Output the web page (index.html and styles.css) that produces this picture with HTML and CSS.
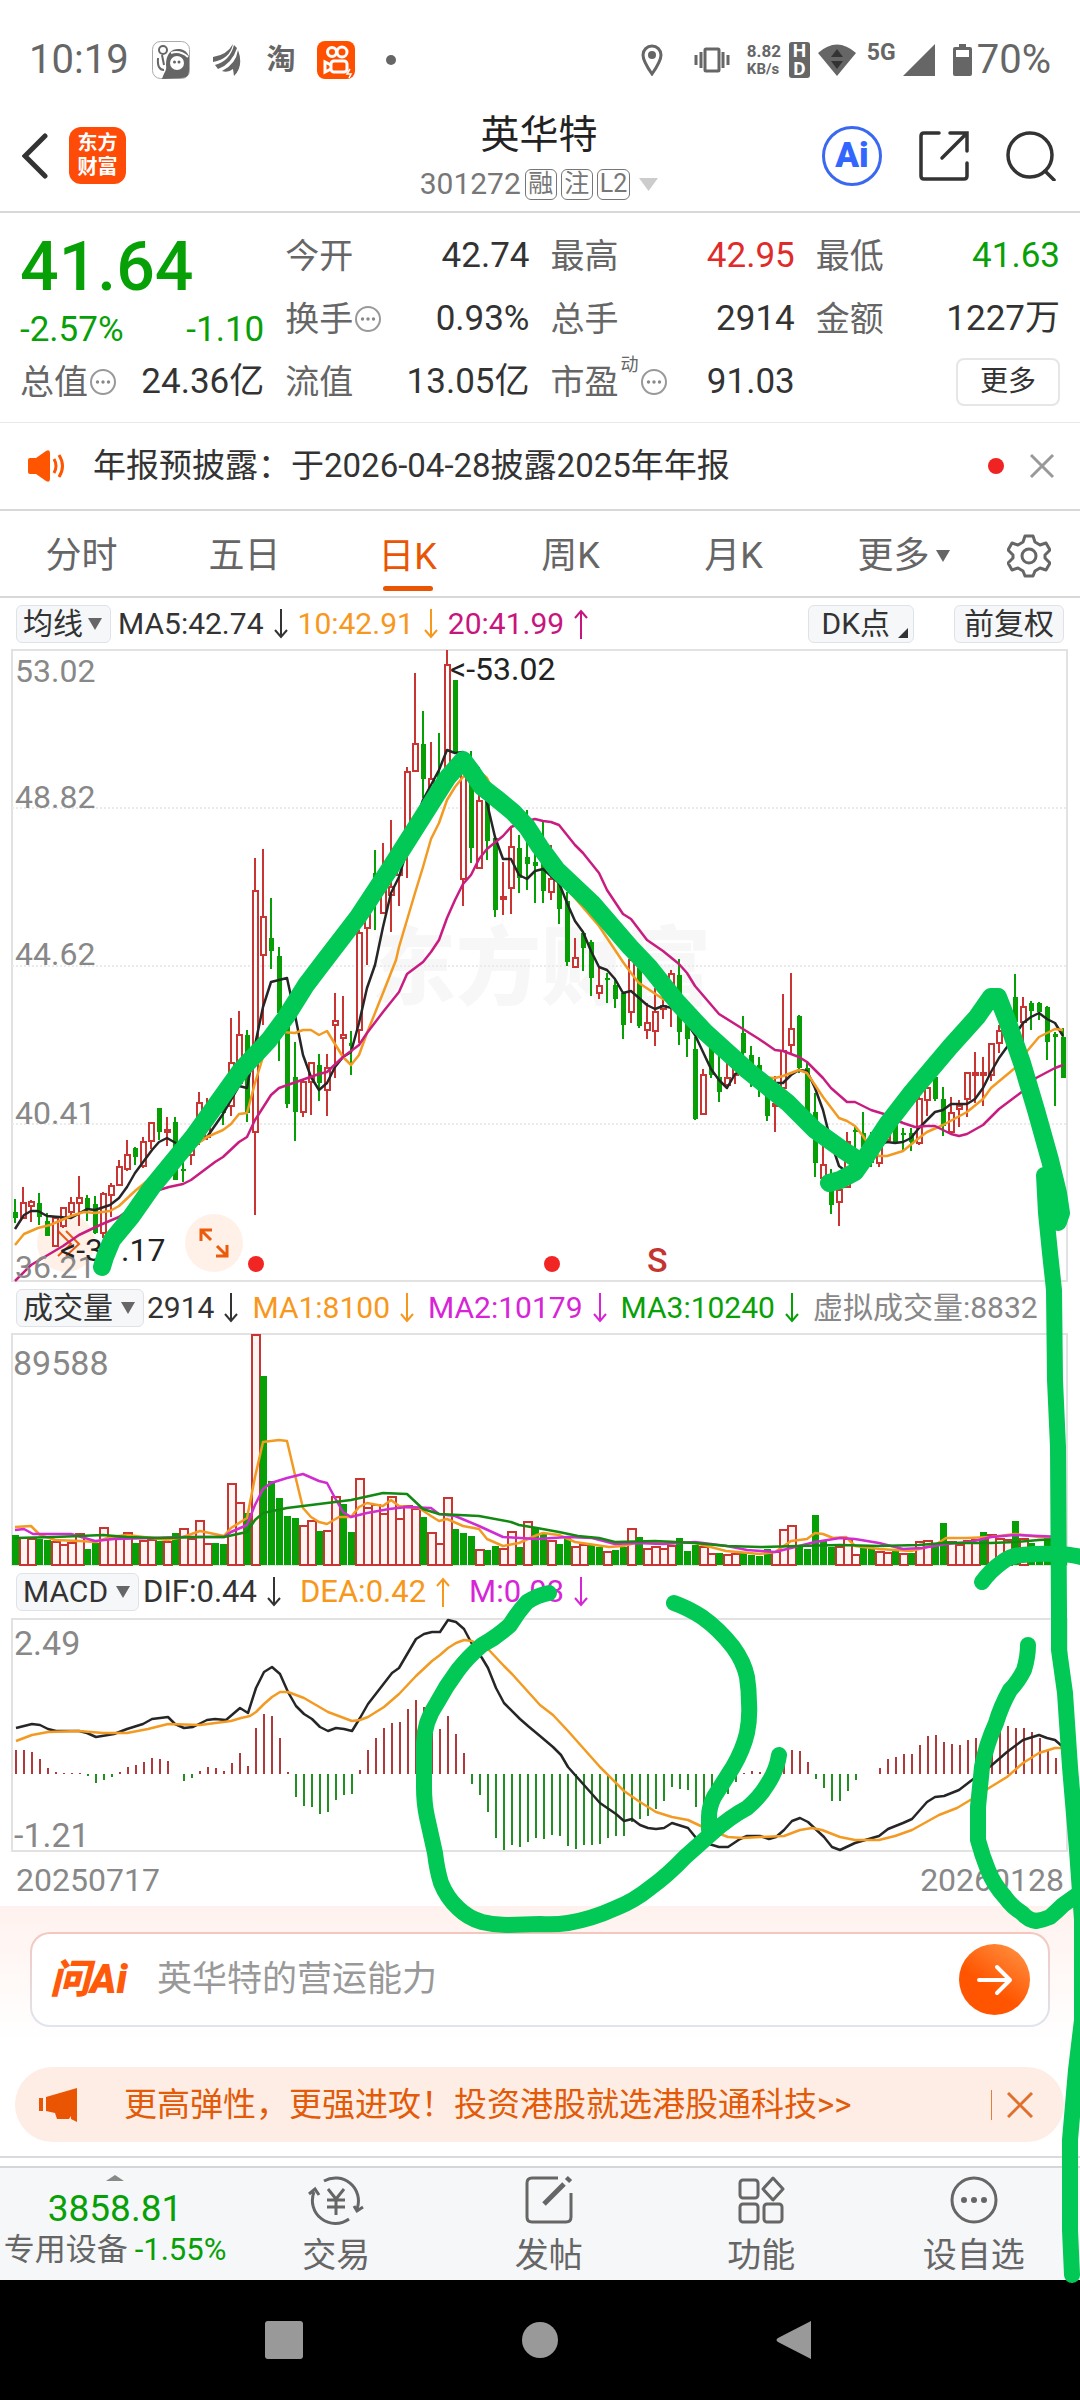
FILE: index.html
```html
<!DOCTYPE html>
<html lang="zh-CN">
<head>
<meta charset="utf-8">
<meta name="viewport" content="width=device-width, initial-scale=1">
<title>英华特 301272</title>
<link rel="stylesheet" href="styles.css">
</head>
<body>
<svg class="defs" aria-hidden="true">
  <symbol id="down" viewBox="0 0 14 30"><path d="M7 0V28M1 21L7 28L13 21" fill="none" stroke="currentColor" stroke-width="2"/></symbol>
  <symbol id="up" viewBox="0 0 14 30"><path d="M7 30V2M1 9L7 2L13 9" fill="none" stroke="currentColor" stroke-width="2"/></symbol>
  <symbol id="info" viewBox="0 0 26 26"><circle cx="13" cy="13" r="12" fill="none" stroke="#999" stroke-width="2"/><g fill="#888"><circle cx="7.500" cy="13" r="1.700"/><circle cx="13" cy="13" r="1.700"/><circle cx="18.500" cy="13" r="1.700"/></g></symbol>
</svg>
<div class="screen">
  <div class="status">
    <div class="status-side">
      <time class="clock">10:19</time>
      <svg class="app-a" viewBox="0 0 38 38"><rect x=".5" y=".5" width="37" height="37" rx="8" fill="#fff" stroke="#aaa"/><path d="M10 38C12 31 15 30 14 24C14 12 20 8 26 8C32 8 34 10 37 15V30Q37 37 30 37Z" fill="#666"/><circle cx="11" cy="9" r="4" fill="none" stroke="#666" stroke-width="2"/><path d="M6 17Q5 29 12 29M10 14L12 24" stroke="#666" stroke-width="2" fill="none"/><circle cx="25" cy="22" r="7" fill="#fff"/><path d="M19 12Q28 9 36 16" stroke="#fff" stroke-width="2" fill="none"/><circle cx="22.500" cy="21" r="1.500" fill="#666"/><circle cx="27" cy="21" r="1.500" fill="#666"/></svg>
      <svg class="app-b" viewBox="0 0 28 32"><path d="M0 13Q14 11 20 0Q17 15 0 18ZM2 21Q17 17 21 1L24 4Q19 20 5 25ZM9 27Q23 20 25 6Q31 22 21 32L20 25Q15 29 9 27Z" fill="#666"/></svg>
      <span class="tao">淘</span>
      <svg class="app-c" viewBox="0 0 38 38"><rect width="38" height="38" rx="8" fill="#ff5000"/><g fill="none" stroke="#fff" stroke-width="3"><circle cx="15" cy="11" r="4.500"/><circle cx="25" cy="11" r="5"/><rect x="14" y="20" width="16" height="11" rx="3"/><path d="M14 24L8 21V31L14 28"/></g><path d="M33 28L30 33H34L32 37" stroke="#fff" stroke-width="1.500" fill="none"/></svg>
      <span class="more-dot"></span>
    </div>
    <div class="status-side">
      <svg class="pin" viewBox="0 0 22 32"><path d="M11 30Q2 17 2 11A9 9 0 0 1 20 11Q20 17 11 30Z" fill="none" stroke="#666" stroke-width="3"/><circle cx="11" cy="11" r="4" fill="#666"/></svg>
      <svg class="vibrate" viewBox="0 0 36 26"><rect x="11" y="2" width="14" height="22" rx="1" fill="none" stroke="#666" stroke-width="3"/><path d="M7 5V21M2 8V18M29 5V21M34 8V18" stroke="#666" stroke-width="3"/></svg>
      <span class="speed">8.82<small>KB/s</small></span>
      <span class="hd"><b>H</b><b>D</b></span>
      <svg class="wifi" viewBox="0 0 38 32"><path d="M0 9Q19 -8 38 9L19 32Z" fill="#666"/><path d="M13 13L19 5L25 13ZM13 17H25L19 25Z" fill="#333"/></svg>
      <span class="net">5G</span>
      <svg class="signal" viewBox="0 0 32 32"><path d="M32 0V32H0Z" fill="#666"/></svg>
      <svg class="battery" viewBox="0 0 19 32"><path d="M6 0H13V3H17Q19 3 19 5V30Q19 32 17 32H2Q0 32 0 30V5Q0 3 2 3H6Z" fill="#666"/><path d="M3 6H16V13H3Z" fill="#fff"/></svg>
      <span class="clock">70%</span>
    </div>
  </div>

  <header class="header">
    <div class="header-left">
      <button class="icon-btn" aria-label="返回"><svg class="back" viewBox="0 0 26 46"><path d="M23 3L3 23L23 43" fill="none" stroke="#333" stroke-width="5" stroke-linecap="round"/></svg></button>
      <a class="brand" href="#">东方<br>财富</a>
    </div>
    <div class="title">
      <h1>英华特</h1>
      <div class="code">301272 <i>融</i><i>注</i><i>L2</i><svg class="caret" viewBox="0 0 19 13"><path d="M0 0H19L9.500 13Z" fill="#ccc"/></svg></div>
    </div>
    <div class="header-right">
      <button class="ai-btn">Ai</button>
      <button class="icon-btn" aria-label="分享"><svg class="share" viewBox="0 0 50 50"><path d="M20 2H5Q2 2 2 5V45Q2 48 5 48H45Q48 48 48 45V32M31 2H48V20M47 3L23 27" fill="none" stroke="#333" stroke-width="3.500" stroke-linecap="round"/></svg></button>
      <button class="icon-btn" aria-label="搜索"><svg class="search" viewBox="0 0 50 50"><circle cx="24" cy="24" r="22" fill="none" stroke="#333" stroke-width="3.500"/><path d="M39 40L48 49" stroke="#333" stroke-width="3.500" stroke-linecap="round"/></svg></button>
    </div>
  </header>

  <section class="quote">
    <div class="col">
      <div class="price green">41.64</div>
      <div class="pair change green"><span>-2.57%</span><span>-1.10</span></div>
      <div class="pair"><span class="label">总值<svg class="info"><use href="#info"/></svg></span><span>24.36亿</span></div>
    </div>
    <div class="col">
      <div class="pair"><span class="label">今开</span><span>42.74</span></div>
      <div class="pair"><span class="label">换手<svg class="info"><use href="#info"/></svg></span><span>0.93%</span></div>
      <div class="pair"><span class="label">流值</span><span>13.05亿</span></div>
    </div>
    <div class="col">
      <div class="pair"><span class="label">最高</span><span class="red">42.95</span></div>
      <div class="pair"><span class="label">总手</span><span>2914</span></div>
      <div class="pair"><span class="label">市盈<small>动</small><svg class="info"><use href="#info"/></svg></span><span>91.03</span></div>
    </div>
    <div class="col">
      <div class="pair"><span class="label">最低</span><span class="green">41.63</span></div>
      <div class="pair"><span class="label">金额</span><span>1227万</span></div>
      <div class="pair end"><button class="more">更多</button></div>
    </div>
  </section>

  <section class="notice">
    <svg class="horn" viewBox="0 0 38 32"><path d="M0 10Q0 8 2 8H8L18 1Q22 -1 22 3V29Q22 33 18 31L8 24H2Q0 24 0 22Z" fill="#ff5500"/><path d="M26 9Q30 16 26 23M31 5Q38 16 31 27" fill="none" stroke="#ff5500" stroke-width="3"/></svg>
    <a class="notice-text" href="#">年报预披露：于2026-04-28披露2025年年报</a>
    <span class="red-dot"></span>
    <button class="icon-btn" aria-label="关闭"><svg class="close" viewBox="0 0 26 26"><path d="M2 2L24 24M24 2L2 24" stroke="#999" stroke-width="3"/></svg></button>
  </section>

  <nav class="tabs">
    <button>分时</button>
    <button>五日</button>
    <button class="active">日K</button>
    <button>周K</button>
    <button>月K</button>
    <button class="tab-more">更多<svg class="tri" viewBox="0 0 14 12"><path d="M0 0H14L7 12Z" fill="#666"/></svg></button>
    <button aria-label="设置"><svg class="gear" viewBox="0 0 44 44"><path d="M18 2H26L28 8L33 11L39 9L43 16L38 21V24L43 29L39 36L33 34L28 37L26 42H18L16 37L11 34L5 36L1 29L6 24V21L1 16L5 9L11 11L16 8Z" fill="none" stroke="#666" stroke-width="3" stroke-linejoin="round"/><circle cx="22" cy="22" r="7" fill="none" stroke="#666" stroke-width="3"/></svg></button>
  </nav>

  <div class="legend">
    <button class="chip">均线<svg class="tri" viewBox="0 0 14 12"><path d="M0 0H14L7 12Z" fill="#666"/></svg></button>
    <span>MA5:42.74<svg class="arrow"><use href="#down"/></svg></span>
    <span class="orange tight">10:42.91<svg class="arrow"><use href="#down"/></svg></span>
    <span class="magenta tight">20:41.99<svg class="arrow"><use href="#up"/></svg></span>
    <span class="chips">
      <button class="chip dk">DK点<svg class="corner" viewBox="0 0 10 10"><path d="M10 0V10H0Z" fill="#333"/></svg></button>
      <button class="chip wide">前复权</button>
    </span>
  </div>
  <div class="price-panel">
    <svg id="price" class="plot" viewBox="0 -1 1080 633" role="img" aria-label="日K线"></svg>
    <button class="expand" aria-label="全屏"><svg viewBox="0 0 58 58"><path d="M16 27V16H27M16 16L26 26M42 31V42H31M42 42L32 32" fill="none" stroke="#ea5b0c" stroke-width="3"/></svg></button>
  </div>
  <div class="legend">
    <button class="chip">成交量<svg class="tri gap" viewBox="0 0 14 12"><path d="M0 0H14L7 12Z" fill="#666"/></svg></button>
    <span class="near">2914<svg class="arrow"><use href="#down"/></svg></span>
    <span class="orange">MA1:8100<svg class="arrow"><use href="#down"/></svg></span>
    <span class="violet">MA2:10179<svg class="arrow"><use href="#down"/></svg></span>
    <span class="green">MA3:10240<svg class="arrow"><use href="#down"/></svg></span>
    <span class="gray">虚拟成交量:8832</span>
  </div>
  <svg id="volume" class="plot" viewBox="0 -1 1080 233" role="img" aria-label="成交量"></svg>
  <div class="legend roomy">
    <button class="chip">MACD<svg class="tri gap" viewBox="0 0 14 12"><path d="M0 0H14L7 12Z" fill="#666"/></svg></button>
    <span class="near">DIF:0.44<svg class="arrow"><use href="#down"/></svg></span>
    <span class="orange">DEA:0.42<svg class="arrow"><use href="#up"/></svg></span>
    <span class="violet">M:0.03<svg class="arrow"><use href="#down"/></svg></span>
  </div>
  <svg id="macd" class="plot" viewBox="0 -1 1080 235" role="img" aria-label="MACD"></svg>
  <div class="dates"><time>20250717</time><time>20260128</time></div>

  <section class="ask">
    <form class="ask-box">
      <label class="ask-logo" for="question">问Ai</label>
      <input id="question" type="text" placeholder="英华特的营运能力">
      <button class="send" type="button" aria-label="提问"><svg viewBox="0 0 36 32"><path d="M2 16H33M20 3L33 16L20 29" fill="none" stroke="#fff" stroke-width="4" stroke-linecap="round" stroke-linejoin="round"/></svg></button>
    </form>
  </section>
  <aside class="banner">
    <svg class="mega" viewBox="0 0 38 34"><path d="M38 0V34L32 31V28L30 31H18L16 25L7 23V9ZM0 10H4V23H0Z" fill="#ea5504"/></svg>
    <a href="#">更高弹性，更强进攻！投资港股就选港股通科技&gt;&gt;</a>
    <span class="rule"></span>
    <button class="icon-btn" aria-label="关闭广告"><svg class="close" viewBox="0 0 26 26"><path d="M1 1L25 25M25 1L1 25" stroke="#e0702e" stroke-width="3"/></svg></button>
  </aside>

  <nav class="dock">
    <a class="index" href="#">
      <svg class="peak" viewBox="0 0 18 6"><path d="M0 6L9 0L18 6Z" fill="#888"/></svg>
      <strong class="green">3858.81</strong>
      <span>专用设备<em class="green">-1.55%</em></span>
    </a>
    <a href="#"><svg viewBox="0 0 56 50"><g fill="none" stroke="#666" stroke-width="3"><path d="M16 6A23 23 0 0 1 49 34M41 44A23 23 0 0 1 6 17M1 19L7 14L11 20M46 31L49 36L55 32M20 14L28 24L36 14M19 25H37M19 32H37M28 24V40"/></g></svg>交易</a>
    <a href="#"><svg viewBox="0 0 56 50"><g fill="none" stroke="#666" stroke-width="3"><path d="M37 3H11Q6 3 6 8V42Q6 47 11 47H45Q50 47 50 42V18"/><path d="M23 29L43 9" stroke-width="5"/><path d="M46 6L49 3" stroke-width="6"/></g></svg>发帖</a>
    <a href="#"><svg viewBox="0 0 56 50"><g fill="none" stroke="#666" stroke-width="3"><rect x="7" y="5" width="18" height="18" rx="3"/><rect x="7" y="29" width="18" height="18" rx="3"/><rect x="31" y="29" width="18" height="18" rx="3"/><path d="M40 3L50 14L40 25L30 14Z" stroke-linejoin="round"/></g></svg>功能</a>
    <a href="#"><svg viewBox="0 0 56 50"><circle cx="28" cy="25" r="22" fill="none" stroke="#666" stroke-width="3"/><g fill="#666"><circle cx="18" cy="25" r="3"/><circle cx="28" cy="25" r="3"/><circle cx="38" cy="25" r="3"/></g></svg>设自选</a>
  </nav>

  <div class="system">
    <button aria-label="最近任务"><svg viewBox="0 0 40 40"><rect x="1" y="1" width="38" height="38" rx="3" fill="#999"/></svg></button>
    <button aria-label="主屏幕"><svg viewBox="0 0 40 40"><circle cx="20" cy="20" r="18" fill="#999"/></svg></button>
    <button aria-label="后退"><svg viewBox="0 0 40 40"><path d="M35 1V39L2 22Q-1 20 2 18Z" fill="#999"/></svg></button>
  </div>

  <svg class="marks" viewBox="0 0 1080 2400" aria-hidden="true">
    <g fill="none" stroke="#02c855" stroke-width="16" stroke-linecap="round" stroke-linejoin="round">
      <path stroke-width="18" d="M102 1267L105 1257L112 1240L131 1217L152 1187L193 1137L241 1070L269 1040L286 1017L306 985L325 960L358 917L389 870L427 810L448 777L463 760L472 772L482 787L496 798L513 812L527 827L540 847L557 870L592 903L630 947L650 968L678 1003L705 1032L747 1070L788 1103L815 1130L843 1150L855 1158"/>
      <path stroke-width="18" d="M829 1183L840 1180L855 1172L867 1155L888 1123L912 1092L950 1047L977 1017L991 997L998 997L1007 1020L1022 1063L1036 1110L1050 1160L1058 1193L1061 1213L1058 1222"/>
      <path d="M1044 1175L1046 1213L1050 1253L1054 1290L1055 1380L1058 1447L1059 1610L1059 1650L1065 1693L1070 1767L1077 1850L1082 1920L1082 2020L1076 2070L1070 2140L1070 2230L1072 2275M1052 1180L1054 1220"/>
      <path d="M549 1593Q538 1595 527 1602Q518 1612 510 1625Q497 1637 482 1645Q468 1657 458 1670Q446 1686 437 1703Q424 1722 424 1743V1787Q424 1803 427 1817Q431 1835 435 1853Q437 1870 441 1883Q447 1898 458 1908Q468 1918 482 1922Q494 1925 506 1925L540 1924Q555 1925 568 1923Q592 1919 616 1908Q634 1901 650 1888Q668 1875 685 1857L712 1833Q730 1817 747 1808Q760 1797 767 1785Q777 1770 779 1755"/>
      <path d="M674 1603Q688 1608 702 1617Q719 1629 733 1647Q744 1662 747 1677Q749 1690 749 1703Q750 1718 747 1733Q743 1750 733 1767L714 1797Q709 1807 709 1817V1830"/>
      <path d="M982 1582Q990 1571 1001 1563Q1011 1555 1022 1555Q1040 1553 1057 1554Q1072 1554 1084 1558M1028 1645Q1028 1657 1024 1670Q1018 1682 1010 1690Q1001 1706 996 1723Q986 1745 982 1767L978 1807V1840Q982 1855 988 1870Q994 1885 1005 1897Q1012 1907 1022 1913Q1028 1920 1036 1921Q1043 1920 1050 1917Q1057 1911 1063 1905L1084 1890"/>
    </g>
  </svg>
</div>
<script src="charts.js"></script>
</body>
</html>
```
FILE: styles.css
```css
* { box-sizing: border-box; }
body {
  margin: 0;
  background: #fff;
  color: #333;
  font-family: Roboto, "Noto Sans CJK SC", sans-serif;
  font-size: 34px;
  line-height: 40px;
}
button, input { font: inherit; color: inherit; border: 0; padding: 0; margin: 0; background: none; }
a { color: inherit; text-decoration: none; }
svg { display: block; flex: none; }
.defs { position: absolute; width: 0; height: 0; }
.screen { position: relative; overflow: hidden; }
.green { color: #07a007; }
.red { color: #e02b2b; }
.orange { color: #f7981d; }
.magenta { color: #c8157e; }
.violet { color: #d724d7; }
.gray { color: #888; }
.icon-btn { display: block; flex: none; }

.status { display: flex; justify-content: space-between; padding: 38px 29px 0 29px; height: 108px; color: #666; }
.status-side { display: flex; align-items: center; height: 44px; }
.clock { font-size: 40px; line-height: 44px; }
.app-a { width: 38px; height: 38px; margin-left: 23px; }
.app-b { width: 28px; height: 32px; margin-left: 23px; }
.tao { font-size: 29px; font-weight: 700; margin-left: 26px; }
.app-c { width: 38px; height: 38px; margin-left: 21px; }
.more-dot { width: 10px; height: 10px; border-radius: 50%; background: #666; margin-left: 31px; }
.pin { width: 22px; height: 32px; }
.vibrate { width: 36px; height: 26px; margin-left: 31px; }
.speed { width: 36px; margin-left: 17px; font-size: 17px; line-height: 18px; font-weight: 700; }
.speed small { display: block; font-size: 15px; }
.hd { display: flex; flex-direction: column; align-items: center; width: 21px; height: 36px; margin-left: 6px; border-radius: 3px; background: #666; color: #fff; font-size: 19px; line-height: 18px; }
.wifi { width: 38px; height: 32px; margin-left: 8px; }
.net { align-self: flex-start; margin-left: 11px; font-size: 23px; line-height: 30px; font-weight: 700; }
.signal { width: 32px; height: 32px; margin-left: 7px; }
.battery { width: 19px; height: 32px; margin: 0 5px 0 18px; }

.header { display: grid; grid-template-columns: 1fr auto 1fr; align-items: center; height: 105px; padding: 0 24px 0 22px; border-bottom: 2px solid #d8d8d8; }
.header-left, .header-right { display: flex; align-items: center; padding-bottom: 8px; }
.header-right { justify-content: flex-end; gap: 37px; }
.back { width: 26px; height: 46px; }
.brand { width: 57px; height: 57px; margin-left: 21px; padding-top: 4px; border-radius: 12px; background: #ff4b08; color: #fff; text-align: center; font-size: 20px; line-height: 24px; font-weight: 700; }
.title { display: flex; flex-direction: column; align-items: center; padding-bottom: 5px; color: #222; }
h1 { margin: 0; font-size: 39px; line-height: 54px; font-weight: 400; }
.code { display: flex; align-items: center; gap: 4px; height: 44px; font-size: 30px; color: #777; }
.code i { height: 31px; min-width: 32px; padding: 0 2px; border: 1px solid #777; border-radius: 6px; text-align: center; font-size: 25px; line-height: 28px; font-style: normal; }
.caret { width: 19px; height: 13px; margin-left: 5px; }
.ai-btn { width: 60px; height: 60px; border: 3px solid #3a68f0; border-radius: 50%; color: #3366ff; font-size: 35px; line-height: 50px; font-weight: 900; }
.share, .search { width: 50px; height: 50px; }

.quote { display: grid; grid-template-columns: repeat(4, 1fr); gap: 21px; height: 210px; padding: 11px 20px 0; border-bottom: 1px solid #e8e8e8; }
.pair { display: flex; justify-content: space-between; align-items: center; height: 63px; font-size: 35px; }
.pair.end { justify-content: flex-end; }
.label { display: flex; align-items: center; font-size: 34px; color: #666; }
.label small { align-self: flex-start; width: 18px; margin: -12px 0 0 2px; font-size: 18px; line-height: 30px; }
.info { width: 26px; height: 26px; margin-left: 2px; }
.price { height: 82px; font-size: 68px; line-height: 86px; font-weight: 500; }
.pair.change { height: 44px; padding-top: 4px; }
.more { width: 104px; height: 48px; border: 2px solid #e6e6e6; border-radius: 8px; font-size: 28px; }

.notice { display: flex; align-items: center; height: 88px; padding: 0 25px 0 28px; border-bottom: 2px solid #d8d8d8; }
.horn { width: 38px; height: 32px; }
.notice-text { flex: 1; margin-left: 27px; font-size: 33px; }
.red-dot { width: 16px; height: 16px; margin-right: 25px; border-radius: 50%; background: #f02222; }
.close { width: 26px; height: 26px; }

.tabs { display: grid; grid-template-columns: repeat(6, 1fr) 102px; height: 87px; border-bottom: 2px solid #d8d8d8; color: #666; font-size: 36px; }
.tabs button { display: flex; justify-content: center; align-items: center; padding-top: 4px; }
.tabs .active { flex-direction: column; color: #ea5504; padding-top: 20px; gap: 9px; }
.tabs .active::after { content: ""; width: 50px; height: 5px; border-radius: 3px; background: #ea5504; }
.tri { width: 14px; height: 12px; margin-left: 5px; }
.tri.gap { margin-left: 8px; }
.tabs .tab-more { padding-left: 14px; }
.tabs .tri { margin-left: 6px; }
.gear { width: 44px; height: 44px; }

.legend { display: flex; align-items: center; gap: 14px; height: 51px; padding: 0 16px; font-size: 30px; white-space: nowrap; }
.legend.roomy { gap: 19px; height: 52px; font-size: 31px; }
.legend span { display: flex; align-items: center; }
.legend > span:nth-child(2) { margin-left: -7px; }
.legend > .near:nth-child(2) { margin-left: -11px; }
.legend.roomy > .near:nth-child(2) { margin-left: -15px; }
.legend > .tight { margin-left: -4px; }
.chip { display: flex; align-items: center; height: 38px; padding: 0 5px 0 6px; border: 1px solid #dfe2e8; border-radius: 6px; background: #f6f7f9; font-size: 30px; }
.chip .tri { margin-right: 3px; }
.arrow { width: 14px; height: 30px; margin-left: 10px; }
.chips { margin-left: auto; gap: 40px; }
.chip.dk { padding-left: 12px; }
.chip.wide { padding: 0 9px; }
.corner { align-self: flex-end; width: 10px; height: 10px; margin: 0 0 4px 8px; }

.plot { width: 100%; height: auto; }
.price-panel { position: relative; }
.expand { position: absolute; left: 185px; bottom: 10px; width: 58px; height: 58px; border-radius: 50%; background: #fff0e8; }
.axis { font-size: 32px; fill: #888; }
.axis.big { font-size: 34px; }
.note { font-size: 32px; fill: #222; }
.sell { font-size: 34px; font-weight: 500; fill: #c43531; }
.watermark { font-size: 85px; font-weight: 900; fill: #f7f7f7; }
.dates { display: flex; justify-content: space-between; align-items: center; height: 53px; padding: 0 16px; font-size: 32px; color: #888; }

.ask { padding: 26px 30px 0; height: 161px; background: linear-gradient(#fff2ee, #fff 85%); }
.ask-box { display: flex; align-items: center; height: 95px; padding: 0 18px; border: 2px solid transparent; border-radius: 20px; background: linear-gradient(#fff, #fff) padding-box, linear-gradient(#f4c6be, #dfe5f0) border-box; }
.ask-logo { width: 107px; font-size: 40px; font-weight: 900; font-style: italic; color: #ff5a0a; }
.ask-box input { flex: 1; min-width: 0; height: 50px; font-size: 35px; outline: 0; }
.ask-box input::placeholder { color: #999; opacity: 1; }
.send { display: grid; place-items: center; width: 71px; height: 71px; border-radius: 50%; background: linear-gradient(215deg, #ff8c3c 10%, #ff5500 60%); }
.send svg { width: 36px; height: 32px; }

.banner { display: flex; align-items: center; height: 75px; margin: 0 16px 14px 15px; padding: 0 31px 0 24px; border-radius: 38px; background: #fdede4; color: #e35a08; font-size: 33px; }
.mega { width: 38px; height: 34px; }
.banner a { flex: 1; margin-left: 47px; white-space: nowrap; }
.rule { width: 1px; height: 30px; margin-right: 15px; background: #e0803e; }

.dock { display: grid; grid-template-columns: 230px repeat(4, 1fr); height: 124px; border-top: 2px solid #d8dadd; background: linear-gradient(#fff 8px, #d3d7dc 8px, #d3d7dc 10px, #f6f7f9 10px); color: #666; }
.dock a { display: flex; flex-direction: column; align-items: center; padding-top: 17px; gap: 10px; line-height: 40px; }
.dock a > svg { width: 56px; height: 50px; }
.dock .index { gap: 0; }
.dock .index .peak { width: 18px; height: 6px; }
.index strong { margin-top: 8px; font-size: 37px; line-height: 40px; font-weight: 400; }
.index span { font-size: 31px; line-height: 42px; white-space: nowrap; }
.index em { margin-left: 7px; font-size: 31px; font-style: normal; }

.system { display: flex; justify-content: center; align-items: center; gap: 216px; height: 120px; background: #000; }
.system svg { width: 40px; height: 40px; }
.marks { position: absolute; left: 0; top: 0; width: 100%; height: auto; pointer-events: none; }
```
FILE: charts.js
```js
// Candles: colour, then high, body top, body bottom and low in chart units.
const candles = `g549,562,568,573 r537,553,568,568 r550,552,556,572 g543,553,567,575 g563,571,586,586 r568,568,596,596
r558,558,576,578 r547,553,562,567 r526,548,553,576 g545,548,559,571 g546,554,583,584 r542,544,583,588
r533,536,545,567 r510,517,535,536 r490,505,519,521 g497,498,507,515 r487,492,516,518 r473,473,491,499
g458,458,482,490 r467,480,482,496 g467,472,530,530 g507,519,520,532 r492,495,505,515 r442,453,490,495
r448,460,487,490 g452,457,465,468 g443,453,463,475 r368,413,456,466 r361,385,433,436 g380,385,463,472
r208,241,482,565 r199,267,305,375 g248,288,301,319 g297,306,363,411 g373,376,454,458 g392,427,462,491
r430,432,462,467 r413,413,432,465 g404,415,433,451 r404,418,440,466 r343,371,375,428 r346,385,388,407
g381,393,396,425 r280,283,380,393 r257,260,278,315 g200,223,243,280 r193,223,263,264 r170,237,245,282
r207,210,225,256 r117,122,190,228 r23,94,121,121 g61,94,129,148 r92,129,150,153 g83,123,130,133
r0,15,120,123 g30,30,103,103 r103,105,229,256 g101,130,198,213 r117,151,218,218 g133,147,191,210
g187,188,260,267 r212,247,249,265 r177,197,238,264 g185,198,228,243 g160,207,214,240 g203,212,216,253
g170,213,241,253 r195,229,242,250 g223,232,259,274 g242,251,312,316 r288,308,317,317 g283,283,298,321
g290,292,328,346 r317,336,343,349 g323,328,330,353 g328,335,349,358 g343,343,375,389 r310,310,362,373
g317,318,376,378 r353,373,380,389 r338,362,381,396 r347,356,359,369 r320,324,347,377 g309,325,382,395
g367,370,389,407 g387,399,469,470 r419,425,464,465 g390,396,425,428 g403,427,442,452 r412,428,435,438
r410,415,425,434 g366,383,403,410 g396,405,423,437 g407,415,433,447 g433,435,466,471 r426,454,456,482
r344,401,438,438 r323,379,395,403 g365,366,418,423 g413,418,467,467 g443,462,513,527 r493,515,528,528
g519,530,555,564 r537,540,552,576 r482,492,537,537 g477,480,482,500 g462,483,497,510 g482,497,513,517
r493,497,513,517 r477,480,490,493 g470,473,492,492 g478,483,485,500 g478,483,492,501 r443,449,493,495
r433,438,450,466 g423,427,449,451 g437,449,476,486 r447,463,482,482 r450,456,459,477 r422,423,449,467
r402,423,425,453 r407,423,425,456 r393,394,425,431 r375,381,393,403 r353,360,380,390 g324,347,372,372
r347,357,372,391 g351,353,361,380 g352,353,362,370 g356,357,392,410 g382,384,387,456 g378,387,428,428`
  .split(/\s+/).map(s => [s[0], ...s.slice(1).split(",").map(Number)]);

const volumes = `g30 r28 r27 g26 g25 r24 r21 r23 r32 g16 g22 r38 r28 r28 r33 g22 r25 r26 g24 r24 g32 r37 r27 r45 r22 g22 g21
r82 r63 g52 r231 g189 g84 g67 g49 g47 r40 r45 g34 r35 r69 g61 g33 r87 r58 r61 r52 r69 r47 r60 r57 g48 r33 r22 r68 g36
g32 g29 r16 g15 g19 r17 r34 g18 r44 g37 g32 r25 g21 g27 r19 r21 g21 g18 r14 g15 g18 r37 g28 r17 r19 r17 r20 g27 g14
g20 r19 r12 g12 r11 r12 g12 g10 g9 g16 r14 r36 r40 g19 g16 g50 g25 g18 r19 r27 r11 g18 g17 r14 r13 g14 r12 g12 r24
r25 g19 g42 r24 r21 r25 r26 g33 r31 r27 r26 g44 r27 g22 g19 g29 g27 g8`.split(/\s+/);

const histogram = [24,24,22,15,6,2,1,1,1,-2,-9,-6,-3,2,7,9,12,16,15,13,0,-7,-4,3,7,6,3,11,21,8,46,60,58,36,2,
-23,-32,-33,-40,-38,-26,-21,-20,4,24,36,46,51,52,65,74,67,55,45,58,40,21,-10,-21,-38,-64,-76,-71,-73,-68,-64,
-65,-61,-62,-72,-75,-71,-71,-70,-64,-62,-62,-48,-45,-42,-35,-27,-13,-15,-16,-33,-31,-26,-22,-20,-8,1,3,2,2,3,
18,24,23,12,-5,-14,-27,-27,-17,-6,0,0,6,15,17,20,20,29,38,39,32,30,29,34,36,38,42,44,48,46,46,42,36,24,16,1];

const RED = "#c93532", GREEN = "#06a006", ORANGE = "#f39a22", MAGENTA = "#c91c80", VIOLET = "#d02cd0", BLACK = "#262626";
const centre = i => 15 + 8 * i;
const rect = (x, y, w, h, fill, more = "") => `<rect x="${x}" y="${y}" width="${w}" height="${h}" fill="${fill}" ${more}/>`;
const line = (x1, y1, x2, y2, c, w = 2, more = "") => `<path d="M${x1} ${y1}L${x2} ${y2}" stroke="${c}" stroke-width="${w}" ${more}/>`;
const curve = (pts, c) => `<polyline points="${pts}" fill="none" stroke="${c}" stroke-width="2.500" stroke-linejoin="round"/>`;
const text = (x, y, cls, s) => `<text x="${x}" y="${y}" class="${cls}">${s}</text>`;
const frame = h => rect(12, 0, 1055, h, "none", 'stroke="#e2e2e2" stroke-width="2"');
const draw = (id, s) => { document.getElementById(id).innerHTML = s; };

let p = text(371, 348, "watermark", "东方财富") + frame(631);
for (const y of [158, 316, 474]) p += line(12, y, 1067, y, "#ebebeb", 2, 'stroke-dasharray="2 2"');
p += `<circle cx="66" cy="593" r="29" fill="#fff0e8"/><path d="M58 581L71 594L58 606M66 581L79 594L66 606" fill="none" stroke="#ea5b0c" stroke-width="2"/>`;
candles.forEach(([k, hi, top, bottom, lo], i) => {
  const x = centre(i), h = Math.max(bottom - top, 2);
  if (k === "g") {
    p += line(x, hi, x, lo, GREEN) + rect(x - 2, top, 5, h, GREEN);
  } else {
    p += line(x, hi, x, top, RED) + line(x, bottom, x, lo, RED);
    p += rect(x - 2, top, 5, h, "#fff", `stroke="${RED}" stroke-width="2"`);
  }
});
p += curve("15,579 24,565 31,561 38,561 47,566 71,568 87,559 95,560 110,555 119,548 127,537 135,523 152,500 159,492 167,488 174,492 183,497 191,497 207,487 223,464 239,436 247,438 255,395 263,357 271,332 287,328 295,365 303,405 311,427 319,440 327,433 335,417 343,407 351,402 359,373 367,338 375,315 383,277 391,243 399,227 407,200 415,173 423,150 439,120 447,100 455,103 463,102 471,115 479,122 487,153 495,187 503,209 511,209 519,225 527,229 535,221 543,219 559,233 567,253 575,271 583,282 591,301 599,317 607,320 615,329 623,343 631,341 647,355 655,359 663,356 677,359 687,373 695,385 703,402 711,419 719,430 727,438 735,424 743,420 751,423 760,430 775,433 783,433 791,425 799,420 807,421 815,438 823,460 831,492 839,516 847,522 855,515 871,497 887,492 895,493 903,492 911,488 919,478 935,462 943,460 951,454 967,454 975,449 983,438 991,422 999,408 1007,397 1015,385 1023,373 1031,367 1039,363 1047,369 1055,373 1063,386", BLACK);
p += curve("15,595 24,584 38,578 50,575 71,566 84,562 95,563 110,561 119,556 135,541 152,527 175,510 193,497 207,487 223,480 231,474 239,464 247,463 255,433 263,407 271,390 282,382 295,383 303,380 311,380 319,385 327,381 335,394 343,407 351,415 359,405 367,383 383,343 396,310 399,297 415,243 423,217 431,189 439,173 447,150 455,137 463,127 479,121 487,128 495,145 511,167 527,190 551,223 574,247 599,276 607,288 623,312 631,323 639,333 663,349 687,362 719,397 743,417 760,427 775,428 783,426 799,420 807,423 815,435 823,447 839,468 847,471 855,476 863,486 871,498 879,506 887,506 903,501 919,488 927,482 943,475 967,462 983,449 991,438 1015,418 1023,406 1039,387 1055,379 1063,380", ORANGE);
p += curve("15,631 31,615 63,596 79,585 100,575 119,567 138,553 159,540 169,537 183,534 191,530 215,512 223,507 239,492 247,487 255,470 271,445 279,438 319,424 327,422 343,407 359,395 367,383 383,362 399,342 407,324 423,312 431,302 439,290 447,268 455,250 463,234 471,225 479,209 487,199 503,186 511,177 519,174 527,171 535,169 543,171 551,172 559,175 575,195 583,203 599,223 607,240 623,264 631,269 647,290 663,301 679,314 687,323 695,336 719,364 735,374 759,389 775,400 783,401 799,407 807,412 823,428 831,438 847,452 855,452 871,460 884,464 903,473 915,477 927,476 935,476 951,484 959,486 967,484 983,475 999,459 1023,441 1036,428 1055,418 1063,415", MAGENTA);
[["53.02", 32], ["48.82", 158], ["44.62", 315], ["40.41", 474], ["36.21", 628]].forEach(([s, y]) => { p += text(15, y, "axis", s); });
p += text(450, 30, "note", "&lt;-53.02") + text(60, 611, "note", "&lt;-37.17");
p += `<circle cx="256" cy="614" r="8" fill="#f22525"/><circle cx="552" cy="614" r="8" fill="#f22525"/>` + text(647, 622, "sell", "S");
draw("price", p);

let v = frame(231);
volumes.forEach((s, i) => {
  const x = centre(i), h = +s.slice(1);
  v += s[0] === "g" ? rect(x - 3, 231 - h, 7, h, GREEN)
    : rect(x - 3, 232 - h, 8, h - 1, "#fff6f4", `stroke="${RED}" stroke-width="2"`);
});
v += curve("15,193 31,192 40,201 55,206 79,207 96,208 110,203 127,201 152,204 167,206 183,203 200,197 224,202 231,194 247,184 255,143 263,108 279,106 287,107 295,141 303,174 311,183 319,188 327,190 339,183 351,183 359,173 367,169 383,172 391,166 399,172 419,174 431,182 439,187 447,185 463,192 479,195 487,205 503,212 519,209 537,201 543,199 559,201 575,208 609,213 623,212 639,208 671,208 695,209 726,217 760,220 775,218 791,207 807,205 815,199 823,200 833,204 846,203 855,212 879,215 911,217 935,211 946,204 967,204 991,203 1015,200 1039,203 1063,204", ORANGE);
v += curve("15,196 24,195 33,200 71,200 95,207 114,205 152,204 183,203 224,203 231,198 247,191 255,171 263,155 271,149 287,144 303,140 319,147 327,149 335,164 343,178 351,183 367,179 389,175 407,173 431,174 439,180 455,182 479,192 503,203 537,205 568,203 592,204 615,210 636,209 663,210 695,208 727,212 747,216 775,218 795,213 815,208 840,204 855,205 879,209 903,215 922,214 946,210 970,208 991,203 1015,201 1063,203", VIOLET);
v += curve("15,204 55,203 103,201 127,203 159,204 200,203 224,203 247,198 255,186 263,179 287,174 311,171 327,169 351,166 383,159 407,160 423,175 439,180 479,182 511,188 519,191 537,194 559,198 578,202 599,204 615,208 655,207 695,209 727,212 760,213 798,212 840,211 879,212 919,211 943,209 991,209 1015,208 1039,206 1063,205", "#128a12");
draw("volume", v + text(13, 41, "axis big", "89588"));

let m = frame(232);
histogram.forEach((h, i) => { if (h) m += line(16 + 8 * i, 155, 16 + 8 * i, 155 - h, h > 0 ? "#b03a3a" : "#228f22"); });
m += curve("16,109 32,105 40,106 48,110 56,112 79,112 87,114 96,118 114,115 127,110 143,105 152,100 168,98 175,105 184,109 193,108 207,101 215,100 226,101 240,89 248,94 256,69 264,53 272,48 280,55 288,73 296,87 304,95 312,100 320,108 328,112 336,109 344,110 352,112 360,99 368,85 392,54 399,49 416,20 424,15 432,13 440,13 448,1 456,3 464,10 472,25 482,39 488,49 496,69 504,84 520,100 528,107 540,117 553,128 561,136 568,148 584,166 600,184 616,195 624,202 632,200 640,206 648,209 656,210 664,209 672,204 688,209 697,220 709,225 719,228 728,228 740,220 747,217 760,217 769,220 776,218 784,211 792,202 800,199 808,203 824,218 832,228 840,231 855,224 879,217 888,210 903,204 912,200 927,183 935,178 944,177 959,171 972,161 992,146 1007,133 1023,121 1039,116 1047,119 1055,121 1063,128", BLACK);
m += curve("16,122 32,116 48,113 79,112 103,114 127,114 148,110 168,105 200,106 231,102 241,99 250,97 256,93 264,85 272,78 280,73 288,73 304,79 328,93 352,102 360,101 368,98 384,88 399,75 416,57 432,42 440,36 448,29 456,24 464,21 472,22 488,30 504,47 512,55 540,86 553,96 568,112 600,148 624,172 640,183 656,193 672,198 688,201 705,209 728,218 743,219 760,218 784,217 800,211 812,209 822,211 840,218 855,221 879,221 895,217 912,211 939,196 957,189 972,180 989,169 1007,158 1023,144 1039,134 1055,129 1063,129", ORANGE);
draw("macd", m + text(14, 36, "axis big", "2.49") + text(14, 228, "axis big", "-1.21"));
```
